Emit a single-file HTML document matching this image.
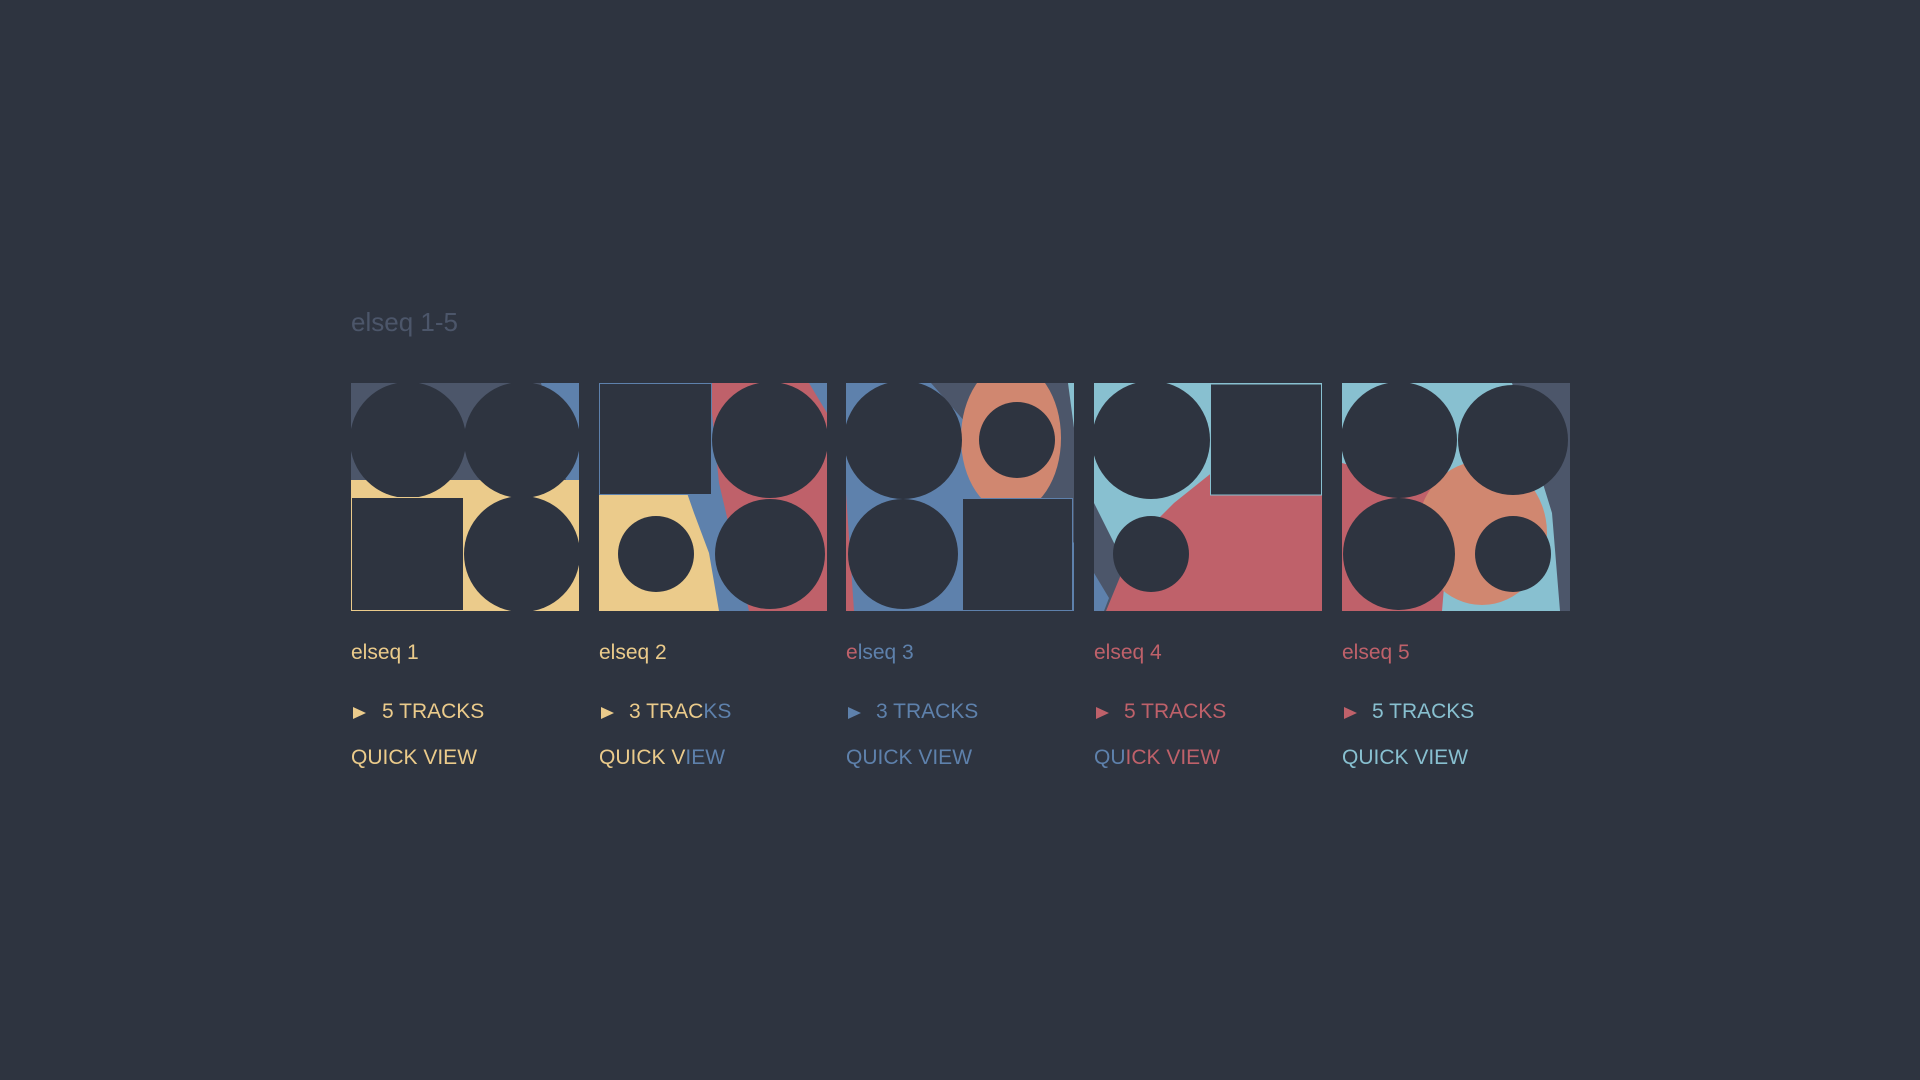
<!DOCTYPE html>
<html><head><meta charset="utf-8"><style>
html,body{margin:0;padding:0;background:#2e3440;width:1920px;height:1080px;overflow:hidden;font-family:"Liberation Sans",sans-serif;}
.t{position:absolute;left:351px;top:307px;font-size:26px;color:#4c566a;}
.card{position:absolute;top:383px;width:228px;}
svg{display:block;}
.n{position:absolute;top:641px;font-size:21px;white-space:nowrap;}
.tr{position:absolute;top:700px;font-size:21px;white-space:nowrap;}
.tri{position:absolute;top:707px;width:0;height:0;border-top:6px solid transparent;border-bottom:6px solid transparent;border-left:13px solid;}
.q{position:absolute;top:746px;font-size:21px;white-space:nowrap;}
</style></head><body>
<div class="t">elseq 1-5</div>

<!-- card 1 -->
<div class="card" style="left:351px">
<svg width="228" height="228" viewBox="0 0 228 228">
<rect width="228" height="228" fill="#ebcb8b"/>
<rect width="228" height="97" fill="#4c566a"/>
<polygon points="190,0 228,0 228,97 215,97" fill="#5e81ac"/>
<circle cx="57" cy="57" r="58" fill="#2e3440"/><circle cx="171" cy="57" r="58" fill="#2e3440"/>
<circle cx="171" cy="171" r="58" fill="#2e3440"/>
<rect x="0.5" y="114.5" width="112" height="113" fill="#2e3440" stroke="#ebcb8b" stroke-width="1"/>
</svg></div>
<div class="n" style="left:351px;color:#ebcb8b">elseq 1</div>
<div class="tri" style="left:353px;color:#ebcb8b"></div>
<div class="tr" style="left:382px;color:#ebcb8b">5 TRACKS</div>
<div class="q" style="left:351px;color:#ebcb8b">QUICK VIEW</div>

<!-- card 2 -->
<div class="card" style="left:599px">
<svg width="228" height="228" viewBox="0 0 228 228">
<rect width="228" height="228" fill="#bf616a"/>
<polygon points="210,0 228,0 228,30" fill="#5e81ac"/>
<polygon points="0,0 110,0 120,100 150,228 0,228" fill="#5e81ac"/>
<polygon points="0,60 88,110 95,130 110,170 120,228 0,228" fill="#ebcb8b"/>
<circle cx="57" cy="171" r="38" fill="#2e3440"/>
<circle cx="171" cy="57" r="58" fill="#2e3440"/>
<circle cx="171" cy="171" r="55" fill="#2e3440"/>
<rect x="0.5" y="0.5" width="112" height="111" fill="#2e3440" stroke="#5e81ac" stroke-width="1"/>
</svg></div>
<div class="n" style="left:599px;color:#ebcb8b">elseq 2</div>
<div class="tri" style="left:601px;color:#ebcb8b"></div>
<div class="tr" style="left:629px;color:#ebcb8b">3 TRAC<span style="color:#5e81ac">KS</span></div>
<div class="q" style="left:599px;color:#ebcb8b">QUICK V<span style="color:#5e81ac">IEW</span></div>

<!-- card 3 -->
<div class="card" style="left:846px">
<svg width="228" height="228" viewBox="0 0 228 228">
<rect width="228" height="228" fill="#5e81ac"/>
<polygon points="0,110 8,228 0,228" fill="#bf616a"/>
<polygon points="85,0 228,0 228,160 190,120" fill="#4c566a"/>
<polygon points="222,0 228,0 228,45" fill="#88c0d0"/>
<ellipse cx="165" cy="55" rx="50" ry="75" fill="#d08770"/>
<circle cx="57" cy="57" r="59" fill="#2e3440"/>
<circle cx="57" cy="171" r="55" fill="#2e3440"/>
<circle cx="171" cy="57" r="38" fill="#2e3440"/>
<rect x="116.5" y="115.5" width="110" height="112" fill="#2e3440" stroke="#5e81ac" stroke-width="1"/>
</svg></div>
<div class="n" style="left:846px;color:#5e81ac"><span style="color:#bf616a">e</span>lseq 3</div>
<div class="tri" style="left:848px;color:#5e81ac"></div>
<div class="tr" style="left:876px;color:#5e81ac">3 TRACKS</div>
<div class="q" style="left:846px;color:#5e81ac">QUICK VIEW</div>

<!-- card 4 -->
<div class="card" style="left:1094px">
<svg width="228" height="228" viewBox="0 0 228 228">
<rect width="228" height="228" fill="#88c0d0"/>
<polygon points="0,120 30,180 20,228 0,228" fill="#4c566a"/>
<polygon points="0,190 15,215 10,228 0,228" fill="#5e81ac"/>
<polygon points="130,80 228,40 228,228 12,228 40,160 80,120" fill="#bf616a"/>
<circle cx="57" cy="57" r="59" fill="#2e3440"/>
<circle cx="57" cy="171" r="38" fill="#2e3440"/>
<rect x="116.5" y="1" width="111" height="111" fill="#2e3440" stroke="#88c0d0" stroke-width="1"/>
</svg></div>
<div class="n" style="left:1094px;color:#bf616a">elseq 4</div>
<div class="tri" style="left:1096px;color:#bf616a"></div>
<div class="tr" style="left:1124px;color:#bf616a">5 TRACKS</div>
<div class="q" style="left:1094px;color:#bf616a"><span style="color:#5e81ac">QU</span>ICK VIEW</div>

<!-- card 5 -->
<div class="card" style="left:1342px">
<svg width="228" height="228" viewBox="0 0 228 228">
<rect width="228" height="228" fill="#88c0d0"/>
<polygon points="170,0 228,0 228,228 218,228 210,130" fill="#4c566a"/>
<polygon points="0,80 110,110 100,228 0,228" fill="#bf616a"/>
<ellipse cx="140" cy="150" rx="65" ry="72" fill="#d08770"/>
<circle cx="57" cy="57" r="58" fill="#2e3440"/>
<circle cx="171" cy="57" r="55" fill="#2e3440"/>
<circle cx="57" cy="171" r="56" fill="#2e3440"/>
<circle cx="171" cy="171" r="38" fill="#2e3440"/>
</svg></div>
<div class="n" style="left:1342px;color:#bf616a">elseq 5</div>
<div class="tri" style="left:1344px;color:#bf616a"></div>
<div class="tr" style="left:1372px;color:#88c0d0">5 TRACKS</div>
<div class="q" style="left:1342px;color:#88c0d0">QUICK VIEW</div>
</body></html>
